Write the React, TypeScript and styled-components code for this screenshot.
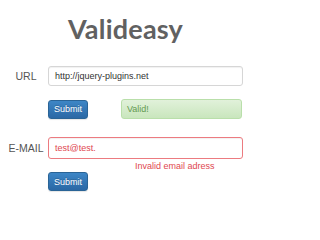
import styled, { createGlobalStyle } from "styled-components";

const GlobalStyle = createGlobalStyle`
  body {
    margin: 0;
    background: #fff;
    font-family: "Liberation Sans", Arial, sans-serif;
  }
`;

const Page = styled.div`
  width: 251px;
  height: 201px;
  padding-top: 15px;
  box-sizing: border-box;
  overflow: hidden;
`;

const Title = styled.h1`
  margin: 0 0 24px;
  font-family: Lato, "DejaVu Sans", sans-serif;
  font-weight: 700;
  font-size: 27px;
  line-height: 27px;
  color: #616161;
  text-align: center;
  letter-spacing: 0.2px;
`;

const Row = styled.div<{ $gap: number }>`
  display: grid;
  grid-template-columns: 48px 195px;
  align-items: center;
  margin-bottom: ${(p) => p.$gap}px;
`;

const Label = styled.label`
  font-size: 10.5px;
  color: #555;
  text-align: center;
  padding-left: 4px;
`;

const Input = styled.div<{ $error?: boolean }>`
  height: ${(p) => (p.$error ? 22 : 20)}px;
  box-sizing: border-box;
  display: flex;
  align-items: center;
  padding-left: 6px;
  border: 1px solid ${(p) => (p.$error ? "#ec7b80" : "#d6d6d6")};
  border-radius: 3px;
  box-shadow: inset 0 1px 1px rgba(0, 0, 0, 0.06);
  font-size: 9px;
  color: ${(p) => (p.$error ? "#e0474f" : "#333")};
`;

const Actions = styled.div`
  display: flex;
  align-items: center;
  gap: 33px;
`;

const Button = styled.button`
  width: 40px;
  height: 19px;
  padding: 0;
  border: 1px solid #2a6496;
  border-radius: 3px;
  background: linear-gradient(#3d86c6, #2b68a5);
  color: #fff;
  font-family: "Liberation Sans", Arial, sans-serif;
  font-size: 9px;
  text-shadow: 0 -1px 0 rgba(0, 0, 0, 0.2);
  box-shadow: 0 1px 1px rgba(0, 0, 0, 0.1);
`;

const Success = styled.div`
  flex: 1;
  height: 20px;
  box-sizing: border-box;
  display: flex;
  align-items: center;
  padding-left: 5px;
  margin-right: 1px;
  border: 1px solid #b9dfaa;
  border-radius: 3px;
  background: linear-gradient(#e1f1da, #c9e6bd);
  color: #639a50;
  font-size: 9px;
`;

const ErrorText = styled.div`
  grid-column: 2;
  margin-top: 2px;
  padding-left: 87px;
  font-size: 9px;
  line-height: 11px;
  color: #e0474f;
`;

export default function App() {
  return (
    <Page>
      <GlobalStyle />
      <Title>Valideasy</Title>
      <Row $gap={13}>
        <Label>URL</Label>
        <Input>http://jquery-plugins.net</Input>
      </Row>
      <Row $gap={18}>
        <span />
        <Actions>
          <Button type="button">Submit</Button>
          <Success>Valid!</Success>
        </Actions>
      </Row>
      <Row $gap={0}>
        <Label>E-MAIL</Label>
        <Input $error>test@test.</Input>
        <ErrorText>Invalid email adress</ErrorText>
      </Row>
      <Row $gap={0}>
        <span />
        <Button type="button">Submit</Button>
      </Row>
    </Page>
  );
}
